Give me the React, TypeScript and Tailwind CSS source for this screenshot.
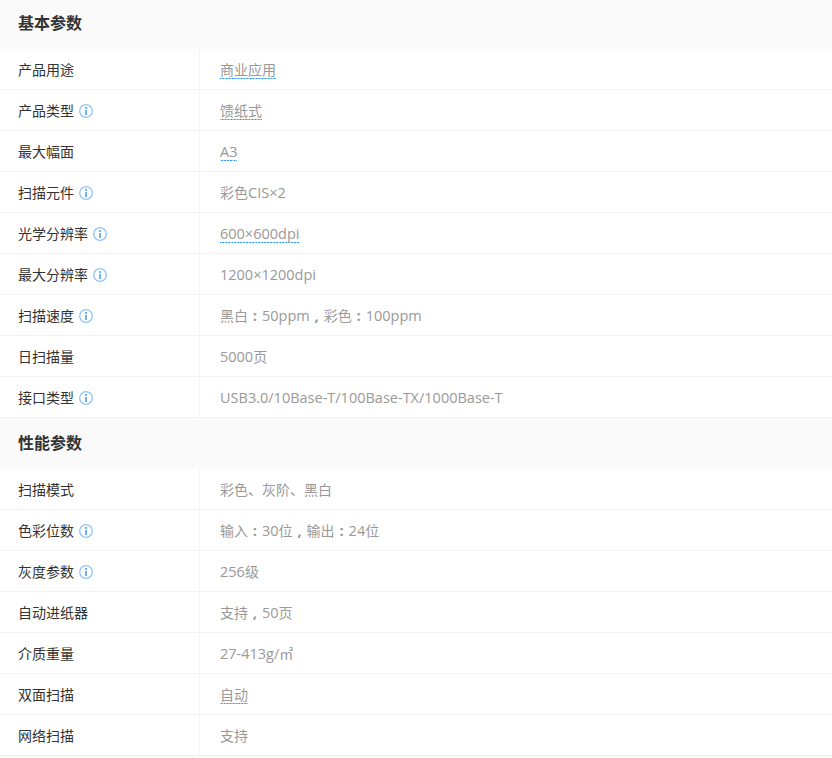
import React from 'react';

type Row = { label: string; value: string; info?: boolean; link?: boolean };

const basic: Row[] = [
  { label: '产品用途', value: '商业应用', link: true },
  { label: '产品类型', value: '馈纸式', info: true, link: true },
  { label: '最大幅面', value: 'A3', link: true },
  { label: '扫描元件', value: '彩色CIS×2', info: true },
  { label: '光学分辨率', value: '600×600dpi', info: true, link: true },
  { label: '最大分辨率', value: '1200×1200dpi', info: true },
  { label: '扫描速度', value: '黑白：50ppm，彩色：100ppm', info: true },
  { label: '日扫描量', value: '5000页' },
  { label: '接口类型', value: 'USB3.0/10Base-T/100Base-TX/1000Base-T', info: true },
];

const perf: Row[] = [
  { label: '扫描模式', value: '彩色、灰阶、黑白' },
  { label: '色彩位数', value: '输入：30位，输出：24位', info: true },
  { label: '灰度参数', value: '256级', info: true },
  { label: '自动进纸器', value: '支持，50页' },
  { label: '介质重量', value: '27-413g/㎡' },
  { label: '双面扫描', value: '自动', link: true },
  { label: '网络扫描', value: '支持' },
];

// latin runs sit a bit larger, full width punctuation is centred in the reference
const Value = ({ text }: { text: string }) => (
  <>
    {text.split(/([\x21-\x7e×]+|[：，])/).map((part, i) => {
      if (part === '：' || part === '，') {
        return (
          <span key={i} className="inline-block w-[14px] text-center text-[15px] font-bold">
            {part === '：' ? ':' : ','}
          </span>
        );
      }
      if (/^[\x21-\x7e×]+$/.test(part)) {
        return (
          <span key={i} className="text-[14.5px]">
            {part}
          </span>
        );
      }
      return part;
    })}
  </>
);

const InfoIcon = () => (
  <svg width="14" height="14" viewBox="0 0 14 14" className="ml-[5px] shrink-0">
    <circle cx="7" cy="7" r="6.3" fill="none" stroke="#8fc5fb" strokeWidth="1.3" />
    <rect x="6" y="3" width="2" height="2" fill="#6cb4fa" />
    <rect x="6" y="6" width="2" height="5" fill="#6cb4fa" />
  </svg>
);

const SpecRow = ({ row }: { row: Row }) => (
  <div className="flex h-[41px] border-b border-[#f2f2f2]">
    <div className="flex w-[200px] items-center border-r border-[#f4f4f4] pt-px pl-[18px] text-[14px] leading-[20px] text-[#333333]">
      <span>{row.label}</span>
      {row.info && <InfoIcon />}
    </div>
    <div className="flex flex-1 items-center pl-[20px] pt-px text-[14px] leading-[20px] text-[#999999]">
      {row.link ? (
        <span className="bg-[linear-gradient(90deg,#1e90ff_2px,transparent_2px)] bg-[length:3px_1px] bg-bottom bg-repeat-x leading-[19px]">
          <Value text={row.value} />
        </span>
      ) : (
        <span>
          <Value text={row.value} />
        </span>
      )}
    </div>
  </div>
);

const Section = ({ title, rows, tall }: { title: string; rows: Row[]; tall?: boolean }) => (
  <section>
    <h3
      className={`flex items-center bg-[#fafafa] pl-[18px] text-[16px] font-bold text-[#333333] ${
        tall ? 'h-[51px] pb-px' : 'h-[49px] pb-[3px]'
      }`}
    >
      {title}
    </h3>
    {rows.map((row) => (
      <SpecRow key={row.label} row={row} />
    ))}
  </section>
);

export default function App() {
  return (
    <div className="h-[758px] w-[832px] overflow-hidden bg-[#fafafa] font-['Open_Sans','Noto_Sans_CJK_SC',sans-serif]">
      <div className="bg-white">
        <Section title="基本参数" rows={basic} />
        <Section title="性能参数" rows={perf} tall />
      </div>
    </div>
  );
}
